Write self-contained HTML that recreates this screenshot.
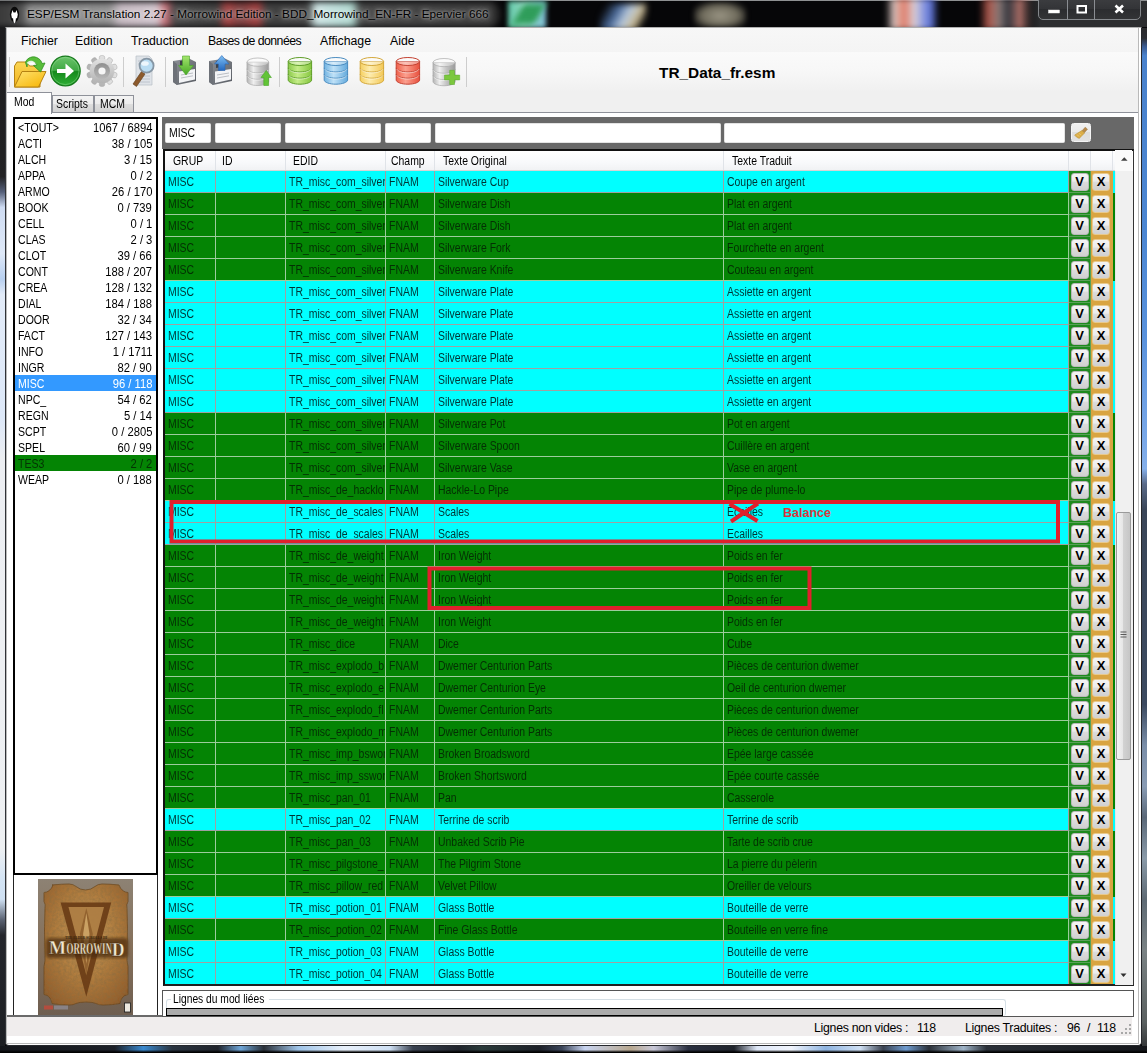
<!DOCTYPE html>
<html lang="fr"><head><meta charset="utf-8"><title>ESP/ESM Translation</title>
<style>
*{box-sizing:border-box;margin:0;padding:0}
html,body{width:1147px;height:1053px;overflow:hidden;background:#101114;font-family:"Liberation Sans",sans-serif;}
#win{position:absolute;left:0;top:0;width:1147px;height:1053px;overflow:hidden;background:#08080a}
#win div,#win svg{position:absolute}
/* frame */
#tbar{left:0;top:0;width:1147px;height:28px;background:#060608;border-top:1px solid #8e9092}
#glow{left:-14px;top:2px;width:514px;height:25px;border-radius:11px;background:linear-gradient(90deg,#3a3a3a 2.700%,#4a4a4a 6.600%,#848484 8.600%,#909090 24.100%,#c8bcc4 26.100%,#d4c8d0 33.200%,#c86a72 35%,#4a4a4a 36.600%,#404040 45.100%,#a84444 46.700%,#7a4040 49.500%,#a84444 52.900%,#404040 54.500%,#404040 62.600%,#cfe6e6 64.200%,#b4dcd4 71.200%,#464646 72.800%,#3e3e3e 98%,#222 100%);filter:blur(3px)}
#ttl{left:27px;top:7px;font-size:11.8px;color:#000;white-space:nowrap;
 text-shadow:0 0 3px rgba(255,255,255,.55),0 0 6px rgba(255,255,255,.45),0 0 10px rgba(255,255,255,.3)}
#lfr{left:0;top:28px;width:5px;height:1025px;background:linear-gradient(#1c1c1e 0%,#222224 14.500%,#56607a 16%,#cfdcf2 17.500%,#dfe9f8 22%,#b8d0f0 24.500%,#e2ebf8 26%,#dde8f8 38%,#eceef2 42%,#eef0f2 80%,#d4e4f4 83%,#cfe0f2 85%,#5a6272 87%,#24262c 88.500%,#1c1e22 100%)}
#rfr{left:1142px;top:28px;width:5px;height:1025px;background:linear-gradient(#2a2a2c 0%,#2c2e34 1%,#3a5a90 1.800%,#4a82cc 2.700%,#4c86d2 20%,#5a92dc 30%,#7aa8e8 40%,#86b0ea 43%,#5a6a88 44.500%,#3a4658 47%,#3c4a60 66%,#7a8ea8 70%,#8a9cb4 74%,#5a6878 77%,#8a9aa8 81%,#5e6a74 85%,#7a8284 90%,#5a6060 97%,#2a2c2e 100%)}
#bfr{left:0;top:1046px;width:1147px;height:7px;background:linear-gradient(rgba(0,0,0,0) 0%,rgba(0,0,0,0) 55%,#000 90%),linear-gradient(90deg,#14161a 0%,#1c2028 10%,#3a8ad0 12.500%,#2a3440 15%,#20242c 19%,#6fa6d8 21%,#2a3038 23%,#9fc4e8 26%,#e8f0fa 30%,#cfe0f4 34%,#3a4250 36%,#20242c 40%,#2a3a3a 42%,#1c2028 47%,#3a4458 49%,#c8d4f0 51%,#b8a890 55%,#c8c8d8 57%,#2a3040 60%,#20242c 64%,#dfe8f8 66%,#f0f4fc 69%,#8fb4e0 72%,#cfe0f4 75%,#3a4250 77%,#6f9cd0 79%,#2a3038 81%,#9fb4c8 84%,#2a3038 86%,#14161a 100%)}
#client{left:5px;top:27px;width:1137px;height:1019px;background:#fff;border:1px solid #26282c;border-top-color:#b0b0b0;border-left-color:#303236;border-radius:0 0 4px 4px}
#client2{left:6px;top:28px;width:1133px;height:1016px;border:1px solid #b9b9b9;border-top:none}
/* menu */
#menu{left:7px;top:28px;width:1131px;height:24px;background:linear-gradient(#f7f7f7,#f4f4f4)}
#menu span{position:absolute;top:6px;font-size:12.3px;color:#000;white-space:nowrap}
#tb{left:7px;top:52px;width:1131px;height:40px;background:linear-gradient(#fafafa 0%,#f7f7f7 50%,#f0f0f0 100%)}
#tabstrip{left:7px;top:92px;width:1131px;height:20px;background:#f0f0f0}
#fname{left:659px;top:64px;font-size:15.4px;font-weight:bold;white-space:nowrap;color:#000}
/* tabs */
.tab{font-size:12px;color:#000;border:1px solid #8e9199;border-bottom:none;background:linear-gradient(#f3f3f3 0%,#ececec 50%,#dedede 50%,#d2d2d2 100%);padding-left:4px;white-space:nowrap}
/* list */
#lb{left:13px;top:117px;width:145px;height:758px;border:2px solid #000;background:#fff;overflow:hidden}
.li{left:0;width:141px;height:16px;font-size:12px;line-height:18px;color:#000;white-space:nowrap}
.la{position:absolute;left:3px;transform:scaleX(.88);transform-origin:0 50%}
.lb{position:absolute;right:4px;transform:scaleX(.935);transform-origin:100% 50%}
.li.sel{background:#3399ff;color:#fff}
.li.tes{background:#048404;color:#043204}
/* filter */
#fbar{left:162px;top:117px;width:971.500px;height:32px;background:#686868}
#fbar .in{position:absolute;top:6px;height:20px;background:#fff;border:1px solid #e3e3e3;border-radius:1.500px;font-size:12px;line-height:18px;padding-left:3px;color:#000}
/* grid */
#grid{left:163px;top:149px;width:971px;height:837px;border:2px solid #111;border-right:1px solid #333;border-bottom:2px solid #222;background:#fff;overflow:hidden}
#hdr{left:0;top:0;width:953px;height:20px;background:linear-gradient(#ffffff,#f8f9fb 60%,#f1f2f4);border-bottom:1px solid #d5d5d5}
#hdr>span{position:absolute;top:0;height:19px;font-size:12px;line-height:20px;color:#000;border-right:1px solid #e0e3e8;padding-left:8px;white-space:nowrap}
#rows{left:0;top:20px;width:953px;height:814px}
.r{left:0;width:953px;height:22px;font-size:12px;line-height:22px;color:#000}
.t{display:inline-block;transform:scaleX(.87);transform-origin:0 50%;white-space:nowrap}
.r .c{position:absolute;top:0;height:22px;border-right:1px solid #a0a0a0;border-bottom:1px solid #a0a0a0;overflow:hidden;white-space:nowrap;padding-left:3px}
.r.rc{background:#00ffff;color:#003434}
.r.rg{background:#048404;color:#042f04}
.r.rg .c{border-color:#9ccc9c}
.c1{left:0;width:51px}.c2{left:51px;width:70px}.c3{left:121px;width:100px}.c4{left:221px;width:49px}.c5{left:270px;width:289px}.c6{left:559px;width:345px}
.c7{left:904px;width:22px;background:#1f8a1f;padding:0 !important;border-color:#5aa05a !important}
.c8{left:926px;width:22px;background:#d9a441;padding:0 !important;border-color:#d9a441 !important}
.r .bt{position:absolute;left:1.500px;top:1.500px;width:18px;height:18px;border-radius:3px;border:1px solid #b9b9b9;background:linear-gradient(#f4f4f4 0%,#ececec 45%,#dcdcdc 50%,#d0d0d0 100%);color:#000;font-size:13px;line-height:16px;text-align:center;font-weight:bold;letter-spacing:0}
.c8 .bt{border-color:#e8c98c;left:1px}
/* scrollbar */
#sb{left:1115px;top:171px;width:18px;height:814px;background:#f0f0f0;border-left:1px solid #e6e6e6}
#thumb{left:1116px;top:512px;width:15px;height:248px;border:1px solid #9a9a9a;border-radius:2px;background:linear-gradient(90deg,#f4f4f4 0%,#e6e6e6 45%,#d2d2d2 50%,#c6c6c6 100%)}
/* status */
#status{left:7px;top:1017px;width:1125px;height:18.500px;background:#f0eded}
#status span{position:absolute;top:4px;letter-spacing:-0.27px;font-size:12.3px;color:#000;white-space:pre}
/* bottom panel */
#lpanel{left:162px;top:990px;width:972px;height:26.500px;background:#fff;border:1px solid #555}
#gb{left:166px;top:999px;width:840px;height:16.500px;border:1px solid #d5dfe5;border-radius:3px;border-bottom:none}
#gbt{left:171px;top:993px;font-size:12px;background:#fff;padding:0 2px;white-space:nowrap;color:#000;line-height:13px;width:98px}
#gp{left:166px;top:1008px;width:837px;height:7.500px;border-bottom:none;background:#ababab;border:1px solid #000}

</style></head><body>
<div id="win">
<div id="tbar"></div>
<div style="left:0;top:0;width:1147px;height:28px;overflow:hidden">
<div style="left:508px;top:1px;width:38px;height:27px;background:linear-gradient(90deg,#5fc7a8,#8fd9c0 40%,#7fc0d8);filter:blur(2.5px)"></div>
<div style="left:518px;top:4px;width:22px;height:20px;background:#2f9d5a;filter:blur(3px);transform:skewX(-30deg)"></div>
<div style="left:600px;top:4px;width:46px;height:26px;background:linear-gradient(120deg,rgba(60,90,140,0) 10%,#4a6a9a 35%,#b9c9dc 55%,#c8b890 75%,rgba(60,60,60,0) 90%);filter:blur(3px)"></div>
<div style="left:694px;top:2px;width:52px;height:25px;background:radial-gradient(ellipse at 50% 55%,#9a9584 0%,#6f6b5c 50%,rgba(40,40,36,0) 85%);filter:blur(2.5px)"></div>
<div style="left:886px;top:-2px;width:52px;height:32px;background:linear-gradient(90deg,rgba(200,190,190,0) 0%,#d9c6c2 15%,#e07a66 35%,#d8d0d8 55%,#7f8fe0 75%,#5a6fd0 88%,rgba(60,70,160,0) 100%);filter:blur(3px)"></div>
<div style="left:980px;top:-2px;width:54px;height:32px;background:linear-gradient(90deg,rgba(150,60,50,0) 0%,#b0564a 15%,#8a7a78 35%,#30343c 52%,#b07068 75%,rgba(120,60,50,0) 100%);filter:blur(3px)"></div>
</div>
<div id="glow"></div>
<svg style="left:8px;top:5px" width="14" height="19" viewBox="0 0 14 19"><ellipse cx="6.500" cy="9.500" rx="4.600" ry="7.800" fill="#0a0a0a"/><path d="M4.500 5l1 2.500h2l1-2.500 1.300 4.500-.800 4-1 -.500-.500 3.500-1 2-1-2-.500-3.500-1 .500-.800-4z" fill="#fff"/></svg><div style="left:1020px;top:1px;width:127px;height:26px;background:linear-gradient(90deg,rgba(44,45,47,0),#2c2d2f 16%)"></div><div style="left:1038px;top:-2px;width:103px;height:21.500px;border:1px solid #85888c;border-radius:0 0 5px 5px;background:linear-gradient(#3c3d40,#333437 50%,#2b2c2f 50%,#333436)"></div>
<div style="left:1067px;top:0;width:1px;height:19px;background:#8a8d92"></div><div style="left:1094px;top:0;width:1px;height:19px;background:#8a8d92"></div>
<svg style="left:1038px;top:0" width="102" height="20" viewBox="0 0 102 20"><g fill="none" stroke="#fff">
<rect x="10.500" y="10" width="11" height="3" fill="#fff" stroke="#e8e8e8" stroke-width=".5"/>
<rect x="39.500" y="6" width="8.500" height="6.500" stroke-width="2"/>
<path d="M77.500 5.500l7.500 7M85 5.500l-7.500 7" stroke-width="2.600"/></g></svg>
<div id="ttl">ESP/ESM Translation 2.27 - Morrowind Edition - BDD_Morrowind_EN-FR - Epervier 666</div>
<div id="lfr"></div><div id="rfr"></div><div id="bfr"></div>
<div id="client"></div><div id="client2"></div>
<div id="menu"><span style="left:14px">Fichier</span><span style="left:68px">Edition</span><span style="left:124px">Traduction</span><span style="left:201px;letter-spacing:-0.55px">Bases de données</span><span style="left:313px">Affichage</span><span style="left:383px">Aide</span></div>
<div id="tb"></div>
<div id="tabstrip"></div>
<svg style="left:0;top:0" width="1147" height="120" viewBox="0 0 1147 120">
<defs>
 <linearGradient id="gFold" x1="0" y1="0" x2="1" y2="1"><stop offset="0" stop-color="#ffe372"/><stop offset="1" stop-color="#f6b300"/></linearGradient>
 <linearGradient id="gFoldB" x1="0" y1="0" x2="0" y2="1"><stop offset="0" stop-color="#fbd654"/><stop offset="1" stop-color="#f2b21c"/></linearGradient>
 <linearGradient id="gGo" x1="0" y1="0" x2="0" y2="1"><stop offset="0" stop-color="#6cc46c"/><stop offset=".48" stop-color="#3fa843"/><stop offset=".52" stop-color="#158a1c"/><stop offset="1" stop-color="#2fae35"/></linearGradient>
 <linearGradient id="gGear" x1="0" y1="0" x2="0" y2="1"><stop offset="0" stop-color="#e2e2e2"/><stop offset="1" stop-color="#b2b2b2"/></linearGradient>
 <linearGradient id="gGear2" x1="0" y1="0" x2="0" y2="1"><stop offset="0" stop-color="#8f8f8f"/><stop offset="1" stop-color="#b8b8b8"/></linearGradient>
 <linearGradient id="gGray" x1="0" y1="0" x2="1" y2="0"><stop offset="0" stop-color="#b4b4b4"/><stop offset=".3" stop-color="#efefef"/><stop offset=".6" stop-color="#c4c4c4"/><stop offset="1" stop-color="#9a9a9a"/></linearGradient>
 <linearGradient id="gFlop" x1="0" y1="0" x2="1" y2="1"><stop offset="0" stop-color="#8e9298"/><stop offset="1" stop-color="#585c63"/></linearGradient>
 <linearGradient id="gDn" x1="0" y1="0" x2="0" y2="1"><stop offset="0" stop-color="#a4e66e"/><stop offset="1" stop-color="#46a824"/></linearGradient>
 <linearGradient id="gUp" x1="0" y1="0" x2="0" y2="1"><stop offset="0" stop-color="#7fc0f4"/><stop offset="1" stop-color="#2468bf"/></linearGradient>
 <linearGradient id="dG" x1="0" y1="0" x2="1" y2="0"><stop offset="0" stop-color="#8cca4a"/><stop offset=".4" stop-color="#c4ec88"/><stop offset="1" stop-color="#86c63f"/></linearGradient>
 <linearGradient id="dB" x1="0" y1="0" x2="1" y2="0"><stop offset="0" stop-color="#72b4e2"/><stop offset=".4" stop-color="#bfe1f7"/><stop offset="1" stop-color="#64aadc"/></linearGradient>
 <linearGradient id="dY" x1="0" y1="0" x2="1" y2="0"><stop offset="0" stop-color="#f6d060"/><stop offset=".4" stop-color="#fdecae"/><stop offset="1" stop-color="#f3c856"/></linearGradient>
 <linearGradient id="dR" x1="0" y1="0" x2="1" y2="0"><stop offset="0" stop-color="#ef5f4a"/><stop offset=".4" stop-color="#fb9f8e"/><stop offset="1" stop-color="#e8503e"/></linearGradient>
 <g id="db">
  <path d="M0.5 4.500v18.500c0 2.300 5.300 4.200 11.700 4.200s11.700-1.900 11.700-4.200v-18.500z"/>
  <path d="M0.500 10.800c0 2.300 5.300 4.200 11.700 4.200s11.700-1.900 11.700-4.200M0.500 17c0 2.300 5.300 4.200 11.700 4.200s11.700-1.900 11.700-4.200" fill="none"/>
  <path d="M1.200 12.200c1 2 5.600 3.600 11 3.600s10-1.600 11-3.600M1.200 18.400c1 2 5.600 3.600 11 3.600s10-1.600 11-3.600" fill="none" stroke="#fff" stroke-opacity=".6" stroke-width=".9"/>
  <ellipse cx="12.200" cy="4.500" rx="11.700" ry="4" fill="#fff" fill-opacity=".38"/>
 </g>
 <g id="flop">
  <path d="M1 5l16-2.500 7 3.500v19l-19 4-4-3z" fill="url(#gFlop)"/>
  <path d="M1 5v21l4 3v-21z" fill="#6d7178"/>
  <path d="M7 15.500l16-2.500v10.500l-16 3.500z" fill="#f3f4f6"/>
  <path d="M9 19l12-2M9 22l12-2.200" stroke="#b4b8be" stroke-width=".9"/>
  <path d="M8 5l9-1.500v7l-9 1.500z" fill="#3e4147"/>
 </g>
</defs>
<path d="M9.500 57v30M123.500 57v30M165.500 57v30M279.500 57v30M466.500 57v30" stroke="#cdcdcd" stroke-width="1"/>
<!-- folder -->
<g transform="translate(13,56)">
 <path d="M1.500 31v-21l2.500-4h10l2.500 4h10.500v21z" fill="url(#gFoldB)" stroke="#b58212" stroke-width="1"/>
 <path d="M1.500 31l7.500-15.500h24l-7.500 15.500z" fill="url(#gFold)" stroke="#b58212" stroke-width="1"/>
 <path d="M12.500 6.500c1.500-5 8-7.500 13-4 2 1.400 3 3 3.500 5l3-.5-4.500 9-7-6.500 3.500-.5c-1-3-6-4.500-8.500-1.500-1.200 1.300-1.500 2.500-1.500 3.500z" fill="#58bd3a" stroke="#2f9120" stroke-width=".8"/>
 <path d="M14 6.500c2-2.500 6-2.500 8 0l-2 2c-1.500-1-3.500-1-5 0z" fill="#fff" opacity=".85"/>
</g>
<!-- go -->
<circle cx="65.400" cy="71" r="14.800" fill="url(#gGo)" stroke="#157a1b" stroke-width="1.200"/>
<circle cx="65.400" cy="71" r="13.600" fill="none" stroke="#9be09b" stroke-opacity=".55" stroke-width=".8"/>
<path d="M57 69h8.500v-5.500l8.500 7.500-8.500 7.500v-5.500h-8.500z" fill="#fff"/>
<!-- gear -->
<g transform="translate(102,71)">
 <g fill="url(#gGear)" stroke="#a8a8a8" stroke-width=".5">
  <rect x="-2.700" y="-15.500" width="5.400" height="31" rx="2"/>
  <rect x="-2.700" y="-15.500" width="5.400" height="31" rx="2" transform="rotate(36)"/>
  <rect x="-2.700" y="-15.500" width="5.400" height="31" rx="2" transform="rotate(72)"/>
  <rect x="-2.700" y="-15.500" width="5.400" height="31" rx="2" transform="rotate(108)"/>
  <rect x="-2.700" y="-15.500" width="5.400" height="31" rx="2" transform="rotate(144)"/>
 </g>
 <circle r="12.300" fill="url(#gGear)"/>
 <circle r="8" fill="url(#gGear2)"/>
 <circle r="3.600" fill="#f6f6f6"/>
</g>
<!-- search -->
<g transform="translate(130,56)">
 <path d="M6 0h13l3 3v26h-16z" fill="#dfe3e8" stroke="#b8bec6" stroke-width=".7"/>
 <path d="M8 5h10M8 8h3M8 20h12M8 23h12M8 26h12" stroke="#b5bcc6" stroke-width=".8"/>
 <path d="M11.500 15.500l3.500 2.500-8.500 12.500-3.500-2.500z" fill="#8c5a2c" stroke="#5c3a1a" stroke-width=".6"/>
 <circle cx="16.600" cy="9.700" r="7" fill="#b9dcf2" stroke="#8696a4" stroke-width="1.800"/>
 <ellipse cx="15" cy="7.500" rx="3.800" ry="2.300" fill="#fff" opacity=".75"/>
</g>
<!-- floppy down -->
<g transform="translate(172,56)"><use href="#flop"/>
 <path d="M10.500 0h7v9.500h4l-7.500 9.500-7.500-9.500h4z" fill="url(#gDn)" stroke="#4aa22a" stroke-width=".6"/></g>
<!-- floppy up -->
<g transform="translate(208,56)"><use href="#flop"/>
 <path d="M10.500 14.500h6.500v-6.500h4l-7.200-8.500-7.300 8.500h4z" fill="url(#gUp)" stroke="#2a66b4" stroke-width=".6"/></g>
<!-- db up -->
<g transform="translate(246.500,57.500) scale(.93,1.030)"><use href="#db" fill="url(#gGray)" stroke="#a8a8a8" stroke-width=".7"/></g>
<path d="M263.800 85.500v-8h-2.800l5.200-7 5.200 7h-2.800v8z" fill="#62c436" stroke="#48a626" stroke-width=".6"/>
<!-- dbs -->
<g transform="translate(287.700,57)"><use href="#db" fill="url(#dG)" stroke="#5f9e28" stroke-width="1"/></g>
<g transform="translate(323.700,57)"><use href="#db" fill="url(#dB)" stroke="#4a8cc0" stroke-width="1"/></g>
<g transform="translate(359.700,57)"><use href="#db" fill="url(#dY)" stroke="#d4a83a" stroke-width="1"/></g>
<g transform="translate(395.700,57)"><use href="#db" fill="url(#dR)" stroke="#c44232" stroke-width="1"/></g>
<!-- db plus -->
<g transform="translate(432.500,58) scale(.95,1.020)"><use href="#db" fill="url(#gGray)" stroke="#a8a8a8" stroke-width=".7"/></g>
<path d="M449.700 70.300h4.800v4.800h5.200v4.800h-5.200v4.600h-4.800v-4.600h-5.200v-4.800h5.200z" fill="#7cc83e" stroke="#5aac2a" stroke-width=".5"/>
</svg>

<div id="fname">TR_Data_fr.esm</div>
<div class="tab" style="left:52px;top:95px;width:42px;height:17px;line-height:17px;padding-left:3px"><span class="t">Scripts</span></div>
<div class="tab" style="left:94px;top:95px;width:40px;height:17px;line-height:17px;padding-left:5px"><span class="t">MCM</span></div>
<div style="left:7px;top:112px;width:1131px;height:904px;background:#fff;border-top:1px solid #8e9199"></div>
<div style="left:13px;top:873px;width:145px;height:143px;border:1px solid #222;background:#fff"></div>
<div class="tab" style="left:7px;top:92px;width:45px;height:22px;line-height:19px;background:#fff;border-left:none;padding-left:7px"><span class="t">Mod</span></div>
<div id="lb">
<div class="li" style="top:0px"><span class="la">&lt;TOUT&gt;</span><span class="lb">1067 / 6894</span></div>
<div class="li" style="top:16px"><span class="la">ACTI</span><span class="lb">38 / 105</span></div>
<div class="li" style="top:32px"><span class="la">ALCH</span><span class="lb">3 / 15</span></div>
<div class="li" style="top:48px"><span class="la">APPA</span><span class="lb">0 / 2</span></div>
<div class="li" style="top:64px"><span class="la">ARMO</span><span class="lb">26 / 170</span></div>
<div class="li" style="top:80px"><span class="la">BOOK</span><span class="lb">0 / 739</span></div>
<div class="li" style="top:96px"><span class="la">CELL</span><span class="lb">0 / 1</span></div>
<div class="li" style="top:112px"><span class="la">CLAS</span><span class="lb">2 / 3</span></div>
<div class="li" style="top:128px"><span class="la">CLOT</span><span class="lb">39 / 66</span></div>
<div class="li" style="top:144px"><span class="la">CONT</span><span class="lb">188 / 207</span></div>
<div class="li" style="top:160px"><span class="la">CREA</span><span class="lb">128 / 132</span></div>
<div class="li" style="top:176px"><span class="la">DIAL</span><span class="lb">184 / 188</span></div>
<div class="li" style="top:192px"><span class="la">DOOR</span><span class="lb">32 / 34</span></div>
<div class="li" style="top:208px"><span class="la">FACT</span><span class="lb">127 / 143</span></div>
<div class="li" style="top:224px"><span class="la">INFO</span><span class="lb">1 / 1711</span></div>
<div class="li" style="top:240px"><span class="la">INGR</span><span class="lb">82 / 90</span></div>
<div class="li sel" style="top:256px"><span class="la">MISC</span><span class="lb">96 / 118</span></div>
<div class="li" style="top:272px"><span class="la">NPC_</span><span class="lb">54 / 62</span></div>
<div class="li" style="top:288px"><span class="la">REGN</span><span class="lb">5 / 14</span></div>
<div class="li" style="top:304px"><span class="la">SCPT</span><span class="lb">0 / 2805</span></div>
<div class="li" style="top:320px"><span class="la">SPEL</span><span class="lb">60 / 99</span></div>
<div class="li tes" style="top:336px"><span class="la">TES3</span><span class="lb">2 / 2</span></div>
<div class="li" style="top:352px"><span class="la">WEAP</span><span class="lb">0 / 188</span></div>
</div>
<svg style="left:38px;top:879px" width="95" height="136" viewBox="0 0 95 136">
<defs><radialGradient id="pg" cx=".5" cy=".42" r=".8"><stop offset="0" stop-color="#c69a5c"/><stop offset=".45" stop-color="#b07c3e"/><stop offset=".8" stop-color="#96602c"/><stop offset="1" stop-color="#7a4c24"/></radialGradient>
<linearGradient id="pe" x1="0" y1="0" x2="0" y2="1"><stop offset="0" stop-color="#8d8274"/><stop offset=".5" stop-color="#85705a"/><stop offset="1" stop-color="#6e5e50"/></linearGradient>
<filter id="nz" x="0" y="0" width="100%" height="100%"><feTurbulence type="fractalNoise" baseFrequency=".35" numOctaves="3" seed="4" result="n"/><feColorMatrix in="n" type="matrix" values="0 0 0 0 .25  0 0 0 0 .15  0 0 0 0 .05  .9 .9 0 0 -.62"/><feComposite operator="in" in2="SourceGraphic"/></filter>
<filter id="bl"><feGaussianBlur stdDeviation="1.6"/></filter></defs>
<rect width="95" height="136" fill="url(#pe)"/>
<path id="pp" d="M14 6q10-1 17-1 4 0 7 2.500 4 3.500 9.500 3.500t9.500-3.500q3-2.500 7-2.500 8 0 17 1 1 4 4.500 6 2 1.500 4.500 1.500v9q-2 3-1 7 1 20 0 46-.500 6 1 12v28q-4 .500-6 3.500-1.500 2.500-2 5.500-8 1.500-17 1.500-4 0-7-1.500t-10-1.500-10 1.500-7 1.500q-9 0-17-1.500-.500-3-2-5.500-2-3-6-3.500v-28q1.500-6 1-12-1-26 0-46 1-4-1-7v-9q2.500 0 4.500-1.500 3.500-2 4.500-6z" fill="url(#pg)" stroke="#6a4620" stroke-width=".8"/>
<use href="#pp" filter="url(#nz)" opacity=".75"/>
<path d="M22.600 23.500h50.600l-24.900 94.300z" fill="#6a3c16" opacity=".92"/>
<path d="M30.500 28h35.500l-17.700 68z" fill="#b88a4c" opacity=".85"/>
<path d="M48.300 29l6.500 26-6.500 42-6.500-42z" fill="#8a5a28" opacity=".75"/>
<path d="M48.300 34l3.200 21-3.200 30-3.200-30z" fill="#d8b070" opacity=".8"/>
<rect x="8" y="59" width="82" height="20" rx="4" fill="#4a2c10" opacity=".7" filter="url(#bl)"/>
<text x="48" y="60" font-family="Liberation Serif,serif" font-size="4.200" font-weight="bold" fill="#3a240e" text-anchor="middle" textLength="42" lengthAdjust="spacingAndGlyphs">THE ELDER SCROLLS III</text>
<text y="75" font-family="Liberation Serif,serif" font-weight="bold" fill="#f1e7cf" stroke="#3a2208" stroke-width=".3"><tspan x="11" font-size="19.500" textLength="17" lengthAdjust="spacingAndGlyphs">M</tspan><tspan x="28.500" font-size="16" textLength="45.500" lengthAdjust="spacingAndGlyphs">ORROWIN</tspan><tspan x="74" dy="1.500" font-size="18" textLength="12.500" lengthAdjust="spacingAndGlyphs">D</tspan></text>
<rect x="6" y="126.500" width="9" height="4" fill="#c4483a" opacity=".8"/><rect x="16" y="126.500" width="14" height="4" fill="#9a9aa8" opacity=".6"/>
<rect x="86.500" y="124" width="6" height="9" fill="#ece8e0" stroke="#1a1a1a" stroke-width=".8"/>
</svg>
<div id="fbar"><span class="in" style="left:3px;width:46px"><span class="t">MISC</span></span><span class="in" style="left:53px;width:66px"></span><span class="in" style="left:123px;width:96px"></span><span class="in" style="left:223px;width:46px"></span><span class="in" style="left:273px;width:285.500px"></span><span class="in" style="left:562px;width:340.500px"></span></div>
<div id="grid">
 <div id="hdr"><span style="left:0;width:51px"><span class="t">GRUP</span></span><span style="left:51px;width:70px;padding-left:6px"><span class="t">ID</span></span><span style="left:121px;width:100px;padding-left:6.500px"><span class="t">EDID</span></span><span style="left:221px;width:49px;padding-left:5px"><span class="t">Champ</span></span><span style="left:270px;width:289px"><span class="t">Texte Original</span></span><span style="left:559px;width:345px"><span class="t">Texte Traduit</span></span><span style="left:904px;width:22px"></span><span style="left:926px;width:22px"></span></div>
 <div id="rows">
<div class="r rc" style="top:0px"><span class="c c1"><span class="t">MISC</span></span><span class="c c2"></span><span class="c c3"><span class="t">TR_misc_com_silver</span></span><span class="c c4"><span class="t">FNAM</span></span><span class="c c5"><span class="t">Silverware Cup</span></span><span class="c c6"><span class="t">Coupe en argent</span></span><span class="c c7"><span class="bt">V</span></span><span class="c c8"><span class="bt">X</span></span></div>
<div class="r rg" style="top:22px"><span class="c c1"><span class="t">MISC</span></span><span class="c c2"></span><span class="c c3"><span class="t">TR_misc_com_silver</span></span><span class="c c4"><span class="t">FNAM</span></span><span class="c c5"><span class="t">Silverware Dish</span></span><span class="c c6"><span class="t">Plat en argent</span></span><span class="c c7"><span class="bt">V</span></span><span class="c c8"><span class="bt">X</span></span></div>
<div class="r rg" style="top:44px"><span class="c c1"><span class="t">MISC</span></span><span class="c c2"></span><span class="c c3"><span class="t">TR_misc_com_silver</span></span><span class="c c4"><span class="t">FNAM</span></span><span class="c c5"><span class="t">Silverware Dish</span></span><span class="c c6"><span class="t">Plat en argent</span></span><span class="c c7"><span class="bt">V</span></span><span class="c c8"><span class="bt">X</span></span></div>
<div class="r rg" style="top:66px"><span class="c c1"><span class="t">MISC</span></span><span class="c c2"></span><span class="c c3"><span class="t">TR_misc_com_silver</span></span><span class="c c4"><span class="t">FNAM</span></span><span class="c c5"><span class="t">Silverware Fork</span></span><span class="c c6"><span class="t">Fourchette en argent</span></span><span class="c c7"><span class="bt">V</span></span><span class="c c8"><span class="bt">X</span></span></div>
<div class="r rg" style="top:88px"><span class="c c1"><span class="t">MISC</span></span><span class="c c2"></span><span class="c c3"><span class="t">TR_misc_com_silver</span></span><span class="c c4"><span class="t">FNAM</span></span><span class="c c5"><span class="t">Silverware Knife</span></span><span class="c c6"><span class="t">Couteau en argent</span></span><span class="c c7"><span class="bt">V</span></span><span class="c c8"><span class="bt">X</span></span></div>
<div class="r rc" style="top:110px"><span class="c c1"><span class="t">MISC</span></span><span class="c c2"></span><span class="c c3"><span class="t">TR_misc_com_silver</span></span><span class="c c4"><span class="t">FNAM</span></span><span class="c c5"><span class="t">Silverware Plate</span></span><span class="c c6"><span class="t">Assiette en argent</span></span><span class="c c7"><span class="bt">V</span></span><span class="c c8"><span class="bt">X</span></span></div>
<div class="r rc" style="top:132px"><span class="c c1"><span class="t">MISC</span></span><span class="c c2"></span><span class="c c3"><span class="t">TR_misc_com_silver</span></span><span class="c c4"><span class="t">FNAM</span></span><span class="c c5"><span class="t">Silverware Plate</span></span><span class="c c6"><span class="t">Assiette en argent</span></span><span class="c c7"><span class="bt">V</span></span><span class="c c8"><span class="bt">X</span></span></div>
<div class="r rc" style="top:154px"><span class="c c1"><span class="t">MISC</span></span><span class="c c2"></span><span class="c c3"><span class="t">TR_misc_com_silver</span></span><span class="c c4"><span class="t">FNAM</span></span><span class="c c5"><span class="t">Silverware Plate</span></span><span class="c c6"><span class="t">Assiette en argent</span></span><span class="c c7"><span class="bt">V</span></span><span class="c c8"><span class="bt">X</span></span></div>
<div class="r rc" style="top:176px"><span class="c c1"><span class="t">MISC</span></span><span class="c c2"></span><span class="c c3"><span class="t">TR_misc_com_silver</span></span><span class="c c4"><span class="t">FNAM</span></span><span class="c c5"><span class="t">Silverware Plate</span></span><span class="c c6"><span class="t">Assiette en argent</span></span><span class="c c7"><span class="bt">V</span></span><span class="c c8"><span class="bt">X</span></span></div>
<div class="r rc" style="top:198px"><span class="c c1"><span class="t">MISC</span></span><span class="c c2"></span><span class="c c3"><span class="t">TR_misc_com_silver</span></span><span class="c c4"><span class="t">FNAM</span></span><span class="c c5"><span class="t">Silverware Plate</span></span><span class="c c6"><span class="t">Assiette en argent</span></span><span class="c c7"><span class="bt">V</span></span><span class="c c8"><span class="bt">X</span></span></div>
<div class="r rc" style="top:220px"><span class="c c1"><span class="t">MISC</span></span><span class="c c2"></span><span class="c c3"><span class="t">TR_misc_com_silver</span></span><span class="c c4"><span class="t">FNAM</span></span><span class="c c5"><span class="t">Silverware Plate</span></span><span class="c c6"><span class="t">Assiette en argent</span></span><span class="c c7"><span class="bt">V</span></span><span class="c c8"><span class="bt">X</span></span></div>
<div class="r rg" style="top:242px"><span class="c c1"><span class="t">MISC</span></span><span class="c c2"></span><span class="c c3"><span class="t">TR_misc_com_silver</span></span><span class="c c4"><span class="t">FNAM</span></span><span class="c c5"><span class="t">Silverware Pot</span></span><span class="c c6"><span class="t">Pot en argent</span></span><span class="c c7"><span class="bt">V</span></span><span class="c c8"><span class="bt">X</span></span></div>
<div class="r rg" style="top:264px"><span class="c c1"><span class="t">MISC</span></span><span class="c c2"></span><span class="c c3"><span class="t">TR_misc_com_silver</span></span><span class="c c4"><span class="t">FNAM</span></span><span class="c c5"><span class="t">Silverware Spoon</span></span><span class="c c6"><span class="t">Cuillère en argent</span></span><span class="c c7"><span class="bt">V</span></span><span class="c c8"><span class="bt">X</span></span></div>
<div class="r rg" style="top:286px"><span class="c c1"><span class="t">MISC</span></span><span class="c c2"></span><span class="c c3"><span class="t">TR_misc_com_silver</span></span><span class="c c4"><span class="t">FNAM</span></span><span class="c c5"><span class="t">Silverware Vase</span></span><span class="c c6"><span class="t">Vase en argent</span></span><span class="c c7"><span class="bt">V</span></span><span class="c c8"><span class="bt">X</span></span></div>
<div class="r rg" style="top:308px"><span class="c c1"><span class="t">MISC</span></span><span class="c c2"></span><span class="c c3"><span class="t">TR_misc_de_hacklo</span></span><span class="c c4"><span class="t">FNAM</span></span><span class="c c5"><span class="t">Hackle-Lo Pipe</span></span><span class="c c6"><span class="t">Pipe de plume-lo</span></span><span class="c c7"><span class="bt">V</span></span><span class="c c8"><span class="bt">X</span></span></div>
<div class="r rc" style="top:330px"><span class="c c1"><span class="t">MISC</span></span><span class="c c2"></span><span class="c c3"><span class="t">TR_misc_de_scales</span></span><span class="c c4"><span class="t">FNAM</span></span><span class="c c5"><span class="t">Scales</span></span><span class="c c6"><span class="t">Ecailles</span></span><span class="c c7"><span class="bt">V</span></span><span class="c c8"><span class="bt">X</span></span></div>
<div class="r rc" style="top:352px"><span class="c c1"><span class="t">MISC</span></span><span class="c c2"></span><span class="c c3"><span class="t">TR_misc_de_scales</span></span><span class="c c4"><span class="t">FNAM</span></span><span class="c c5"><span class="t">Scales</span></span><span class="c c6"><span class="t">Ecailles</span></span><span class="c c7"><span class="bt">V</span></span><span class="c c8"><span class="bt">X</span></span></div>
<div class="r rg" style="top:374px"><span class="c c1"><span class="t">MISC</span></span><span class="c c2"></span><span class="c c3"><span class="t">TR_misc_de_weight</span></span><span class="c c4"><span class="t">FNAM</span></span><span class="c c5"><span class="t">Iron Weight</span></span><span class="c c6"><span class="t">Poids en fer</span></span><span class="c c7"><span class="bt">V</span></span><span class="c c8"><span class="bt">X</span></span></div>
<div class="r rg" style="top:396px"><span class="c c1"><span class="t">MISC</span></span><span class="c c2"></span><span class="c c3"><span class="t">TR_misc_de_weight</span></span><span class="c c4"><span class="t">FNAM</span></span><span class="c c5"><span class="t">Iron Weight</span></span><span class="c c6"><span class="t">Poids en fer</span></span><span class="c c7"><span class="bt">V</span></span><span class="c c8"><span class="bt">X</span></span></div>
<div class="r rg" style="top:418px"><span class="c c1"><span class="t">MISC</span></span><span class="c c2"></span><span class="c c3"><span class="t">TR_misc_de_weight</span></span><span class="c c4"><span class="t">FNAM</span></span><span class="c c5"><span class="t">Iron Weight</span></span><span class="c c6"><span class="t">Poids en fer</span></span><span class="c c7"><span class="bt">V</span></span><span class="c c8"><span class="bt">X</span></span></div>
<div class="r rg" style="top:440px"><span class="c c1"><span class="t">MISC</span></span><span class="c c2"></span><span class="c c3"><span class="t">TR_misc_de_weight</span></span><span class="c c4"><span class="t">FNAM</span></span><span class="c c5"><span class="t">Iron Weight</span></span><span class="c c6"><span class="t">Poids en fer</span></span><span class="c c7"><span class="bt">V</span></span><span class="c c8"><span class="bt">X</span></span></div>
<div class="r rg" style="top:462px"><span class="c c1"><span class="t">MISC</span></span><span class="c c2"></span><span class="c c3"><span class="t">TR_misc_dice</span></span><span class="c c4"><span class="t">FNAM</span></span><span class="c c5"><span class="t">Dice</span></span><span class="c c6"><span class="t">Cube</span></span><span class="c c7"><span class="bt">V</span></span><span class="c c8"><span class="bt">X</span></span></div>
<div class="r rg" style="top:484px"><span class="c c1"><span class="t">MISC</span></span><span class="c c2"></span><span class="c c3"><span class="t">TR_misc_explodo_b</span></span><span class="c c4"><span class="t">FNAM</span></span><span class="c c5"><span class="t">Dwemer Centurion Parts</span></span><span class="c c6"><span class="t">Pièces de centurion dwemer</span></span><span class="c c7"><span class="bt">V</span></span><span class="c c8"><span class="bt">X</span></span></div>
<div class="r rg" style="top:506px"><span class="c c1"><span class="t">MISC</span></span><span class="c c2"></span><span class="c c3"><span class="t">TR_misc_explodo_e</span></span><span class="c c4"><span class="t">FNAM</span></span><span class="c c5"><span class="t">Dwemer Centurion Eye</span></span><span class="c c6"><span class="t">Oeil de centurion dwemer</span></span><span class="c c7"><span class="bt">V</span></span><span class="c c8"><span class="bt">X</span></span></div>
<div class="r rg" style="top:528px"><span class="c c1"><span class="t">MISC</span></span><span class="c c2"></span><span class="c c3"><span class="t">TR_misc_explodo_fl</span></span><span class="c c4"><span class="t">FNAM</span></span><span class="c c5"><span class="t">Dwemer Centurion Parts</span></span><span class="c c6"><span class="t">Pièces de centurion dwemer</span></span><span class="c c7"><span class="bt">V</span></span><span class="c c8"><span class="bt">X</span></span></div>
<div class="r rg" style="top:550px"><span class="c c1"><span class="t">MISC</span></span><span class="c c2"></span><span class="c c3"><span class="t">TR_misc_explodo_m</span></span><span class="c c4"><span class="t">FNAM</span></span><span class="c c5"><span class="t">Dwemer Centurion Parts</span></span><span class="c c6"><span class="t">Pièces de centurion dwemer</span></span><span class="c c7"><span class="bt">V</span></span><span class="c c8"><span class="bt">X</span></span></div>
<div class="r rg" style="top:572px"><span class="c c1"><span class="t">MISC</span></span><span class="c c2"></span><span class="c c3"><span class="t">TR_misc_imp_bswor</span></span><span class="c c4"><span class="t">FNAM</span></span><span class="c c5"><span class="t">Broken Broadsword</span></span><span class="c c6"><span class="t">Epée large cassée</span></span><span class="c c7"><span class="bt">V</span></span><span class="c c8"><span class="bt">X</span></span></div>
<div class="r rg" style="top:594px"><span class="c c1"><span class="t">MISC</span></span><span class="c c2"></span><span class="c c3"><span class="t">TR_misc_imp_sswor</span></span><span class="c c4"><span class="t">FNAM</span></span><span class="c c5"><span class="t">Broken Shortsword</span></span><span class="c c6"><span class="t">Epée courte cassée</span></span><span class="c c7"><span class="bt">V</span></span><span class="c c8"><span class="bt">X</span></span></div>
<div class="r rg" style="top:616px"><span class="c c1"><span class="t">MISC</span></span><span class="c c2"></span><span class="c c3"><span class="t">TR_misc_pan_01</span></span><span class="c c4"><span class="t">FNAM</span></span><span class="c c5"><span class="t">Pan</span></span><span class="c c6"><span class="t">Casserole</span></span><span class="c c7"><span class="bt">V</span></span><span class="c c8"><span class="bt">X</span></span></div>
<div class="r rc" style="top:638px"><span class="c c1"><span class="t">MISC</span></span><span class="c c2"></span><span class="c c3"><span class="t">TR_misc_pan_02</span></span><span class="c c4"><span class="t">FNAM</span></span><span class="c c5"><span class="t">Terrine de scrib</span></span><span class="c c6"><span class="t">Terrine de scrib</span></span><span class="c c7"><span class="bt">V</span></span><span class="c c8"><span class="bt">X</span></span></div>
<div class="r rg" style="top:660px"><span class="c c1"><span class="t">MISC</span></span><span class="c c2"></span><span class="c c3"><span class="t">TR_misc_pan_03</span></span><span class="c c4"><span class="t">FNAM</span></span><span class="c c5"><span class="t">Unbaked Scrib Pie</span></span><span class="c c6"><span class="t">Tarte de scrib crue</span></span><span class="c c7"><span class="bt">V</span></span><span class="c c8"><span class="bt">X</span></span></div>
<div class="r rg" style="top:682px"><span class="c c1"><span class="t">MISC</span></span><span class="c c2"></span><span class="c c3"><span class="t">TR_misc_pilgstone_</span></span><span class="c c4"><span class="t">FNAM</span></span><span class="c c5"><span class="t">The Pilgrim Stone</span></span><span class="c c6"><span class="t">La pierre du pèlerin</span></span><span class="c c7"><span class="bt">V</span></span><span class="c c8"><span class="bt">X</span></span></div>
<div class="r rg" style="top:704px"><span class="c c1"><span class="t">MISC</span></span><span class="c c2"></span><span class="c c3"><span class="t">TR_misc_pillow_red</span></span><span class="c c4"><span class="t">FNAM</span></span><span class="c c5"><span class="t">Velvet Pillow</span></span><span class="c c6"><span class="t">Oreiller de velours</span></span><span class="c c7"><span class="bt">V</span></span><span class="c c8"><span class="bt">X</span></span></div>
<div class="r rc" style="top:726px"><span class="c c1"><span class="t">MISC</span></span><span class="c c2"></span><span class="c c3"><span class="t">TR_misc_potion_01</span></span><span class="c c4"><span class="t">FNAM</span></span><span class="c c5"><span class="t">Glass Bottle</span></span><span class="c c6"><span class="t">Bouteille de verre</span></span><span class="c c7"><span class="bt">V</span></span><span class="c c8"><span class="bt">X</span></span></div>
<div class="r rg" style="top:748px"><span class="c c1"><span class="t">MISC</span></span><span class="c c2"></span><span class="c c3"><span class="t">TR_misc_potion_02</span></span><span class="c c4"><span class="t">FNAM</span></span><span class="c c5"><span class="t">Fine Glass Bottle</span></span><span class="c c6"><span class="t">Bouteille en verre fine</span></span><span class="c c7"><span class="bt">V</span></span><span class="c c8"><span class="bt">X</span></span></div>
<div class="r rc" style="top:770px"><span class="c c1"><span class="t">MISC</span></span><span class="c c2"></span><span class="c c3"><span class="t">TR_misc_potion_03</span></span><span class="c c4"><span class="t">FNAM</span></span><span class="c c5"><span class="t">Glass Bottle</span></span><span class="c c6"><span class="t">Bouteille de verre</span></span><span class="c c7"><span class="bt">V</span></span><span class="c c8"><span class="bt">X</span></span></div>
<div class="r rc" style="top:792px"><span class="c c1"><span class="t">MISC</span></span><span class="c c2"></span><span class="c c3"><span class="t">TR_misc_potion_04</span></span><span class="c c4"><span class="t">FNAM</span></span><span class="c c5"><span class="t">Glass Bottle</span></span><span class="c c6"><span class="t">Bouteille de verre</span></span><span class="c c7"><span class="bt">V</span></span><span class="c c8"><span class="bt">X</span></span></div>
 </div>
</div>
<div id="sb"></div><div id="thumb"></div>
<div style="left:1071px;top:123px;width:19.500px;height:19px;border:1px solid #f4f4f4;border-radius:2.500px;background:linear-gradient(#f0f0f0,#e9e9e9 50%,#dedede 50%,#e2e2e2)"></div>
<svg style="left:1072px;top:124px" width="18" height="18" viewBox="0 0 18 18"><path d="M13.200 3.200l2.300 2-3.200 3.600-2.300-2z" fill="#b98a4a" stroke="#8a6428" stroke-width=".4"/><path d="M9.800 6.600l2.800 2.400-5.400 5.400q-2.600-.400-4.600-3.400z" fill="#dcae48" stroke="#b08a30" stroke-width=".5"/><path d="M5 10.500l2 2M7 9.200l2 2" stroke="#f0d080" stroke-width=".7"/></svg><svg style="left:1115px;top:150px" width="17" height="836" viewBox="0 0 17 836"><rect x="0" y="0" width="17" height="21" fill="#fafafa"/><path d="M6 10.800l3.300-3.600 3.300 3.600z" fill="#404040"/><path d="M5.500 823.500l3 3.500 3-3.500z" fill="#303030"/><path d="M5.500 482h6M5.500 484.500h6M5.500 487h6" stroke="#5a5a5a" stroke-width="1"/></svg><svg style="left:0;top:495px" width="1147" height="125" viewBox="0 495 1147 125">
<rect x="171.500" y="502" width="886.500" height="39.500" fill="none" stroke="#e0202c" stroke-width="4"/>
<rect x="429.500" y="568.500" width="380" height="39.500" fill="none" stroke="#e0202c" stroke-width="4"/>
<path d="M729.500 504l28 17M758 503.500l-27 18" stroke="#e0202c" stroke-width="4" fill="none"/>
<text x="783" y="516.500" font-family="Liberation Sans,sans-serif" font-size="12.500" font-weight="bold" fill="#d9363c" textLength="48">Balance</text>
</svg>
<div style="left:7px;top:1015px;width:1127px;height:1.500px;background:#6a6a6a"></div>
<div id="lpanel"></div>
<div id="gb"></div><div id="gbt"><span class="t" style="transform:scaleX(.855)">Lignes du mod liées</span></div><div id="gp"></div>
<div id="status"><span style="left:807px">Lignes non vides :</span><span style="left:910px">118</span><span style="left:958px">Lignes Traduites :</span><span style="left:1060px">96</span><span style="left:1080px">/</span><span style="left:1090px">118</span></div>
<svg style="left:1120px;top:1023px" width="13" height="13" viewBox="0 0 13 13"><g fill="#a8a8a8"><rect x="9" y="1" width="2" height="2"/><rect x="9" y="5" width="2" height="2"/><rect x="5" y="5" width="2" height="2"/><rect x="9" y="9" width="2" height="2"/><rect x="5" y="9" width="2" height="2"/><rect x="1" y="9" width="2" height="2"/></g></svg>
</div>
</body></html>
